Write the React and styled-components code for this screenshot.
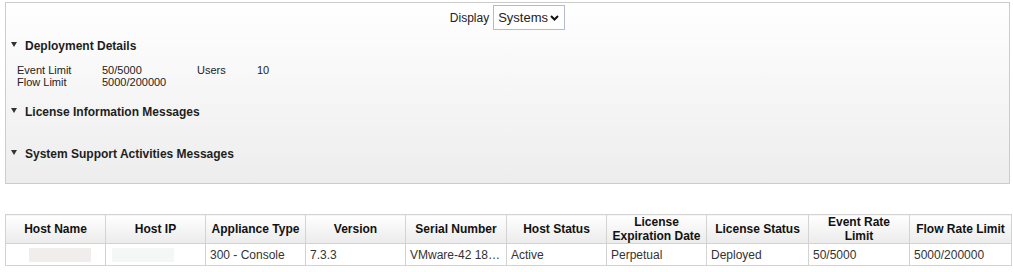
import React from "react";
import styled, { createGlobalStyle } from "styled-components";

const Global = createGlobalStyle`
  html, body { margin: 0; padding: 0; background: #fff; }
  body { font-family: "Liberation Sans", Arial, sans-serif; color: #222; }
`;

const Page = styled.div`
  padding: 2px 3px 0 5px;
  width: 1005px;
`;

const Panel = styled.div`
  box-sizing: border-box;
  width: 1005px;
  border: 1px solid #cccccc;
  background: linear-gradient(#ffffff, #ededed);
  padding: 2px 0 0 0;
`;

const Toolbar = styled.div`
  display: flex;
  justify-content: center;
  align-items: center;
  gap: 4px;
  font-size: 12px;
`;

const SelectWrap = styled.div`
  position: relative;
  display: inline-block;
`;

const Select = styled.select`
  appearance: none;
  box-sizing: border-box;
  width: 72px;
  height: 25px;
  border: 1px solid #b4bccb;
  border-radius: 0;
  background: #fff;
  font-family: "Liberation Sans", Arial, sans-serif;
  font-size: 13px;
  font-weight: normal;
  color: #222;
  padding: 0 0 0 4px;
  margin: 0;
`;

const Chevron = styled.svg`
  position: absolute;
  right: 6px;
  top: 10px;
  pointer-events: none;
`;

const Section = styled.section``;

const Heading = styled.div`
  display: flex;
  align-items: center;
  gap: 8px;
  padding-left: 5px;
  margin-top: ${(p) => p.$top}px;
  font-size: 12px;
  font-weight: bold;
  line-height: 16px;
  color: #1e1e1e;
`;

const Triangle = styled.span`
  width: 0;
  height: 0;
  border-left: 3px solid transparent;
  border-right: 3px solid transparent;
  border-top: 5px solid #333;
  margin-top: -4px;
`;

const SectionBody = styled.div`
  min-height: ${(p) => p.$h}px;
`;

const Details = styled.div`
  display: grid;
  grid-template-columns: 85px 95px 60px auto;
  padding: 10px 0 16px 11px;
  font-size: 11px;
  line-height: 12px;
  color: #222;
`;

const Table = styled.table`
  margin-top: 30px;
  border-collapse: collapse;
  table-layout: fixed;
  width: 1006px;
  font-family: "Liberation Sans", Arial, sans-serif;
  font-size: 12px;
`;

const Th = styled.th`
  border: 1px solid #d3d3d3;
  background: linear-gradient(#ffffff, #ebebeb);
  height: 28px;
  padding: 0 4px;
  line-height: 14px;
  font-weight: bold;
  text-align: center;
  color: #111;
`;

const Td = styled.td`
  border: 1px solid #d3d3d3;
  height: 20px;
  padding: 1px 4px 0;
  color: #333;
  white-space: nowrap;
  text-align: left;
  vertical-align: middle;
`;

const Redacted = styled.span`
  display: inline-block;
  width: 62px;
  height: 14px;
  margin-left: ${(p) => p.$offset}px;
  vertical-align: middle;
  background: ${(p) => p.$bg};
`;

const columns = [
  { t: "Host Name", w: 100 },
  { t: "Host IP", w: 100 },
  { t: "Appliance Type", w: 100 },
  { t: "Version", w: 100 },
  { t: "Serial Number", w: 101 },
  { t: "Host Status", w: 100 },
  { t: "License Expiration Date", w: 100 },
  { t: "License Status", w: 102 },
  { t: "Event Rate Limit", w: 101 },
  { t: "Flow Rate Limit", w: 102 },
];

export default function App() {
  return (
    <>
      <Global />
      <Page>
        <Panel>
          <Toolbar>
            <span>Display</span>
            <SelectWrap>
              <Select defaultValue="Systems">
                <option>Systems</option>
              </Select>
              <Chevron width="9" height="6" viewBox="0 0 9 6">
                <path d="M1 1 L4.5 4.5 L8 1" fill="none" stroke="#111" strokeWidth="2" />
              </Chevron>
            </SelectWrap>
          </Toolbar>

          <Section>
            <Heading $top={8}>
              <Triangle />
              Deployment Details
            </Heading>
            <Details>
              <span>Event Limit</span>
              <span>50/5000</span>
              <span>Users</span>
              <span>10</span>
              <span>Flow Limit</span>
              <span>5000/200000</span>
              <span />
              <span />
            </Details>
          </Section>

          <Section>
            <Heading $top={0}>
              <Triangle />
              License Information Messages
            </Heading>
            <SectionBody $h={26} />
          </Section>

          <Section>
            <Heading $top={0}>
              <Triangle />
              System Support Activities Messages
            </Heading>
            <SectionBody $h={21} />
          </Section>
        </Panel>

        <Table>
          <colgroup>
            {columns.map((c) => (
              <col key={c.t} style={{ width: c.w }} />
            ))}
          </colgroup>
          <thead>
            <tr>
              {columns.map((c) => (
                <Th key={c.t}>{c.t}</Th>
              ))}
            </tr>
          </thead>
          <tbody>
            <tr>
              <Td>
                <Redacted $bg="#f1eded" $offset={19} />
              </Td>
              <Td>
                <Redacted $bg="#f5f7f7" $offset={2} />
              </Td>
              <Td>300 - Console</Td>
              <Td>7.3.3</Td>
              <Td>VMware-42 18…</Td>
              <Td>Active</Td>
              <Td>Perpetual</Td>
              <Td>Deployed</Td>
              <Td>50/5000</Td>
              <Td>5000/200000</Td>
            </tr>
          </tbody>
        </Table>
      </Page>
    </>
  );
}
